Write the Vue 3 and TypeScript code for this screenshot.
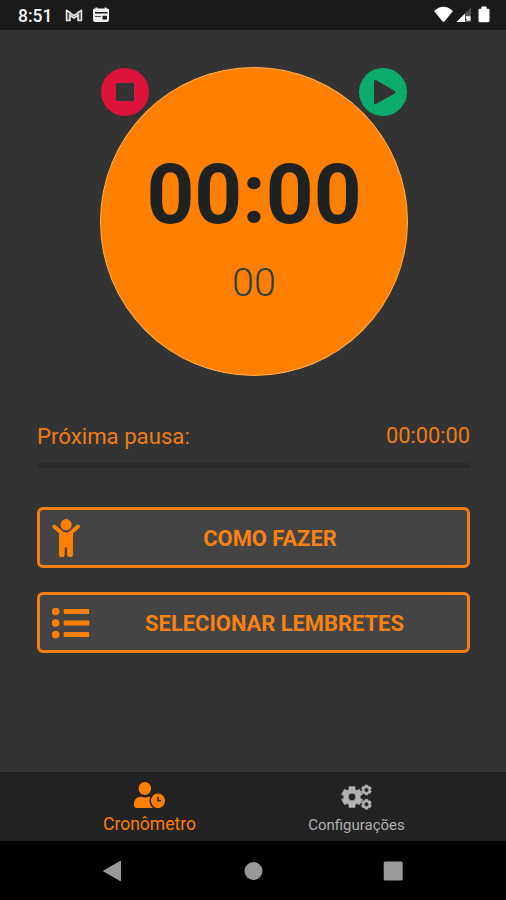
<script setup lang="ts">
function gear(cx: number, cy: number, outer: number, root: number, hole: number): string {
  const pts: string[] = []
  const point = (r: number, deg: number) => {
    const a = (deg * Math.PI) / 180
    return `${(cx + r * Math.cos(a)).toFixed(2)} ${(cy + r * Math.sin(a)).toFixed(2)}`
  }
  for (let i = 0; i < 6; i++) {
    const mid = -90 + i * 60
    pts.push(point(root, mid - 23), point(outer, mid - 16), point(outer, mid + 16), point(root, mid + 23))
  }
  return `M${pts.join('L')}Z M${cx - hole} ${cy}a${hole} ${hole} 0 1 0 ${hole * 2} 0a${hole} ${hole} 0 1 0 ${-hole * 2} 0Z`
}

const gears = [gear(12, 14, 10.8, 8.2, 3.7), gear(26.4, 7, 5.2, 4, 2.2), gear(26.4, 21.2, 5.2, 4, 2.2)].join(' ')
</script>

<template>
  <div class="screen">
    <header class="status">
      <span class="clock">8:51</span>
      <svg class="mail" width="20" height="16" viewBox="0 0 20 16">
        <path d="M2.500 13.500V3.200L10 8.700l7.500-5.500v10.300h-3.500V8.200L10 11.200 6 8.200v5.300z" fill="#555" stroke="#e8e8e8" stroke-width="1.500" stroke-linejoin="round" />
        <path d="M6 13V4.500M14 13V4.500" stroke="#ddd" stroke-width="1" />
      </svg>
      <svg class="calendar" width="18" height="16" viewBox="0 0 18 16">
        <path fill="#eee" fill-rule="evenodd" d="M2.500 1.500H3.500V.5h2v1h7V.5h2v1h1q1.500 0 1.500 1.500v10q0 2-2 2H3q-2 0-2-2V3Q1 1.500 2.500 1.500zM3 5v1.500h12.500V5zM3 9v.8h6V9zM10.500 8.800v3.700H15V8.800z" />
      </svg>
      <svg class="signals" width="60" height="20" viewBox="0 0 60 20">
        <path d="M1 6Q10.500-2.500 20 6L11.700 16.200Q10.500 17.500 9.300 16.200Z" fill="#fff" />
        <path d="M38 2.500V17H23.500z" fill="#555" />
        <path d="M32 8.500V17H23.500z" fill="#fff" />
        <path d="M33 11.200h4.500v4.500H33z" fill="#fff" />
        <path d="M32.500 15.500l1.500-1.500M37.500 16.500v.5" stroke="#333" stroke-width="1" />
        <path d="M46.500 3.800h2V1.500h5v2.300h2q1 0 1 1v11q0 1.400-1.400 1.400h-8.200q-1.400 0-1.400-1.400v-11q0-1 1-1z" fill="#fff" />
      </svg>
    </header>

    <main class="content">
      <section class="timer">
        <div class="time">00:00</div>
        <div class="seconds">00</div>
        <button class="round stop" aria-label="Parar">
          <svg width="48" height="48" viewBox="0 0 48 48"><rect x="15" y="15" width="18" height="18" rx="1" fill="#333" /></svg>
        </button>
        <button class="round play" aria-label="Iniciar">
          <svg width="48" height="48" viewBox="0 0 48 48"><path d="M16.500 13.500V34.500L35 24.200Z" fill="#333" stroke="#333" stroke-width="3" stroke-linejoin="round" /></svg>
        </button>
      </section>

      <div class="next">
        <span class="next-label">Próxima pausa:</span>
        <span class="next-time">00:00:00</span>
      </div>
      <div class="divider"></div>

      <div class="actions">
        <button class="action">
          <svg width="29" height="40" viewBox="0 0 29 40">
            <g fill="none" stroke="#ff7f00" stroke-linecap="round">
              <path d="M2.300 8.500L10 15.200M26 8.500L18.300 15.200" stroke-width="4" />
              <path d="M9.800 17v19.200M18 17v19.200" stroke-width="5.800" />
            </g>
            <path d="M7 13.200q7 2.500 14 0V29.500H7z" fill="#ff7f00" />
            <circle cx="14.100" cy="6.700" r="5.600" fill="#ff7f00" />
          </svg>
          <span>COMO FAZER</span>
        </button>
        <button class="action">
          <svg width="38" height="40" viewBox="0 0 38 40">
            <g fill="#ff7f00">
              <circle cx="3.700" cy="8.500" r="3.800" /><circle cx="3.700" cy="20" r="3.800" /><circle cx="3.700" cy="31.500" r="3.800" />
              <rect x="11.700" y="6" width="25.500" height="5" rx=".7" /><rect x="11.700" y="17.500" width="25.500" height="5" rx=".7" /><rect x="11.700" y="29" width="25.500" height="5" rx=".7" />
            </g>
          </svg>
          <span>SELECIONAR LEMBRETES</span>
        </button>
      </div>
    </main>

    <nav class="tabs">
      <a class="tab active">
        <svg width="31" height="26" viewBox="0 0 640 512" preserveAspectRatio="none">
          <path fill="#ff7f00" d="M496 224c-79.600 0-144 64.400-144 144s64.400 144 144 144 144-64.400 144-144-64.400-144-144-144zm64 150.300c0 5.300-4.400 9.700-9.700 9.700h-60.600c-5.300 0-9.700-4.400-9.700-9.700v-76.600c0-5.300 4.400-9.700 9.700-9.700h12.600c5.300 0 9.700 4.400 9.700 9.700V352h38.300c5.300 0 9.700 4.400 9.700 9.700v12.600zM320 368c0-27.800 6.700-54.100 18.200-77.500-8-1.500-16.200-2.500-24.600-2.500h-16.700c-22.200 10.200-46.900 16-72.900 16s-50.600-5.800-72.900-16h-16.700C60.200 288 0 348.200 0 422.400V464c0 26.500 21.500 48 48 48h347.100c-45.300-31.900-75.100-84.500-75.100-144zm-96-112c70.700 0 128-57.300 128-128S294.700 0 224 0 96 57.300 96 128s57.300 128 128 128z" />
        </svg>
        <span>Cronômetro</span>
      </a>
      <a class="tab settings">
        <svg width="33" height="28" viewBox="0 0 33 28"><path :d="gears" fill="#b2b2b2" fill-rule="evenodd" stroke="#b2b2b2" stroke-width=".5" stroke-linejoin="round" /></svg>
        <span>Configurações</span>
      </a>
    </nav>

    <footer class="system">
      <svg width="20" height="22" viewBox="0 0 20 22"><path d="M1.500 11L18.500 1.200V20.800Z" fill="#999" stroke="#999" stroke-linejoin="round" /></svg>
      <svg width="20" height="20" viewBox="0 0 20 20"><circle cx="10.500" cy="10" r="9" fill="#999" /></svg>
      <svg width="20" height="20" viewBox="0 0 20 20"><rect x=".7" y=".5" width="19" height="19" rx="1.500" fill="#999" /></svg>
    </footer>
  </div>
</template>

<style>
body { background: #333; }
</style>

<style scoped>
.screen {
  width: 506px;
  height: 900px;
  display: flex;
  flex-direction: column;
  background: #333;
  font-family: Roboto, "Liberation Sans", sans-serif;
  overflow: hidden;
}
.status {
  height: 30px;
  flex: none;
  box-sizing: border-box;
  padding: 0 13px 0 18px;
  display: flex;
  align-items: center;
  background: #1a1a1a;
}
.clock { width: 46px; color: #f4f4f4; font-size: 17.5px; font-weight: 500; line-height: 30px; padding-top: 2px; box-sizing: border-box; }
.calendar { margin-left: 8px; }
.signals { margin-left: auto; }
.content { flex: 1; padding: 37px 36px 0 37px; }
.timer {
  position: relative;
  box-sizing: border-box;
  width: 308px;
  height: 309px;
  margin-left: 63px;
  border: 1px solid #ffb14e;
  border-radius: 50%;
  background: #ff7f00;
  text-align: center;
  color: #1f2222;
}
.time { padding-top: 77px; font-size: 83.500px; line-height: 100px; font-weight: 700; }
.seconds { margin-top: 14px; font-size: 39.500px; line-height: 48px; font-weight: 300; color: #2c4240; }
button { font-family: inherit; margin: 0; }
.round {
  position: absolute;
  top: 0;
  width: 48px;
  height: 48px;
  padding: 0;
  border: 0;
  border-radius: 50%;
}
.round svg { display: block; }
.stop { left: 0; background: #dc143c; }
.play { right: 0; background: #0aab6c; }
.next {
  display: flex;
  justify-content: space-between;
  margin-top: 45px;
  height: 30px;
  line-height: 30px;
  font-size: 22.200px;
  color: #ef7d14;
}
.next-time { font-size: 21.800px; }
.divider { height: 5px; margin-top: 12px; border-radius: 3px; background: #2b2b2b; }
.actions { display: grid; gap: 24px; margin-top: 39px; }
.action {
  display: flex;
  align-items: center;
  box-sizing: border-box;
  height: 61px;
  padding: 0 8px 0 12px;
  border: 3px solid #f57f17;
  border-radius: 6px;
  background: #444;
  color: #f98212;
  font-size: 21.900px;
  font-weight: 700;
  white-space: nowrap;
}
.action svg { flex: none; display: block; }
.action span { flex: 1; padding-top: 2px; text-align: center; }
.tabs {
  height: 69px;
  flex: none;
  display: grid;
  grid-template-columns: 299px 115px;
  background: #222;
}
.tab { display: flex; flex-direction: column; align-items: center; }
.active { padding-top: 10px; color: #ff7f00; font-size: 17.500px; }
.active span { line-height: 24px; margin-top: 4px; }
.settings { padding-top: 11px; color: #b0b0b0; font-size: 15px; }
.settings span { line-height: 20px; margin-top: 4px; }
.system {
  height: 59px;
  flex: none;
  box-sizing: border-box;
  padding: 0 103px 0 102px;
  display: flex;
  align-items: center;
  justify-content: space-between;
  background: #000;
}
</style>
